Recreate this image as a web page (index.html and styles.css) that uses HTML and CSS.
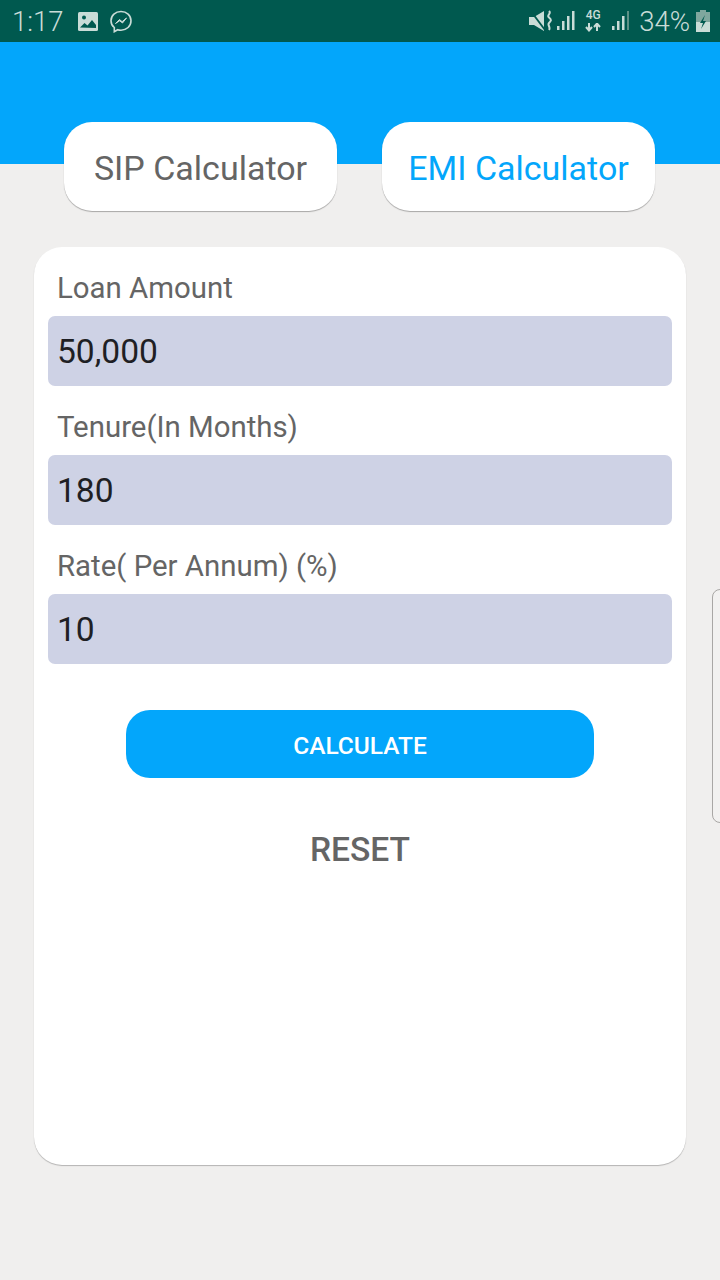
FILE: index.html
```html
<!DOCTYPE html>
<html lang="en">

<head>
    <meta charset="UTF-8">
    <meta name="viewport" content="width=device-width, initial-scale=1.0">
    <title>EMI Calculator</title>
    <link rel="stylesheet" href="styles.css">
</head>

<body>
    <div class="status-bar">
        <div class="status-left">
            <span class="time">1:17</span>
            <svg class="icon-picture" width="20" height="19" viewBox="0 0 20 19">
                <rect width="20" height="19" rx="1.500" fill="#c9dcd7"/>
                <circle cx="6" cy="5.500" r="2" fill="#00594f"/>
                <path d="M2 15.500l4.500-4.500 3 2.500 4.500-5.500 4 5v3z" fill="#00594f"/>
            </svg>
            <svg class="icon-messenger" width="22" height="23" viewBox="0 0 22 23">
                <path d="M11 1.500C5.400 1.500 1 5.500 1 10.700c0 2.900 1.300 5.200 3.300 6.800v4.200l3.400-2c1 .4 2.100.5 3.300.5 5.600 0 10-4 10-9.500S16.600 1.500 11 1.500z" fill="none" stroke="#c9dcd7" stroke-width="1.600"/>
                <path d="M5.500 13.500l4-4 2.600 2.200 4.400-3.700-4 5-2.800-2.200z" fill="#c9dcd7" stroke="#c9dcd7" stroke-width="1"/>
            </svg>
        </div>
        <div class="status-right">
            <svg class="icon-mute" width="23" height="22" viewBox="0 0 23 22">
                <path d="M0 7h5l10-6v20L5 15H0z" fill="#c9dcd7"/>
                <path d="M1 0l15 20" stroke="#00594f" stroke-width="1.800"/>
                <path d="M20 1c3 3-3 4 0 6.500s2 3.500 0 5.500 2 4 0 7" fill="none" stroke="#c9dcd7" stroke-width="2"/>
            </svg>
            <svg class="icon-signal" width="18" height="20" viewBox="0 0 18 20">
                <path d="M0 15h2.500v4H0zM5 10h2.500v9H5zM10 5h2.500v14H10zM15 0h2.500v19H15z" fill="#c9dcd7"/>
            </svg>
            <div class="net">
                <span class="net-label">4G</span>
                <svg width="16" height="9" viewBox="0 0 16 9">
                    <path d="M4 0v7M1 4l3 3.500L7 4M12 8V1M9 4l3-3.500L15 4" fill="none" stroke="#c9dcd7" stroke-width="2"/>
                </svg>
            </div>
            <svg class="icon-signal-2" width="18" height="20" viewBox="0 0 18 20">
                <path d="M0 15h2.500v4H0zM5 10h2.500v9H5zM10 5h2.500v14H10z" fill="#c9dcd7"/>
                <path d="M15 0h2v19h-2z" fill="#5d9186"/>
            </svg>
            <span class="battery-text">34%</span>
            <svg width="14" height="22" viewBox="0 0 14 22">
                <path d="M4 0h6v2h4v20H0V2h4z" fill="#7fa79e"/>
                <path d="M0 12h14v10H0z" fill="#c9dcd7"/>
                <path d="M9 5l-5 8h3l-2 6 5-8H7z" fill="#00594f"/>
            </svg>
        </div>
    </div>

    <header class="top">
        <div class="tabs">
            <div class="tab">SIP Calculator</div>
            <div class="tab tab-active">EMI Calculator</div>
        </div>
    </header>

    <section class="card">
        <div class="field">
            <label class="field-label">Loan Amount</label>
            <div class="field-input">50,000</div>
        </div>
        <div class="field">
            <label class="field-label">Tenure(In Months)</label>
            <div class="field-input">180</div>
        </div>
        <div class="field">
            <label class="field-label">Rate( Per Annum) (%)</label>
            <div class="field-input">10</div>
        </div>
        <button class="calc-btn">CALCULATE</button>
        <button class="reset-btn">RESET</button>
    </section>

    <div class="side-handle"></div>
</body>

</html>
```

FILE: styles.css
```css
body {
    margin: 0;
    padding: 0;
    height: 1280px;
    overflow: hidden;
    position: relative;
    background-color: #f0efee;
    font-family: Roboto, sans-serif;
    color: #656565;
}

.status-bar {
    height: 42px;
    background-color: #00594f;
    color: #c9dcd7;
    display: flex;
    justify-content: space-between;
    align-items: center;
    padding: 0 10px 0 12px;
    box-sizing: border-box;
}

.status-left,
.status-right {
    display: flex;
    align-items: center;
}

.time {
    font-size: 27.500px;
    font-weight: 300;
    margin-right: 14px;
}

.icon-picture {
    margin-right: 12px;
}

.icon-mute {
    margin-right: 5px;
}

.icon-signal {
    margin-right: 10px;
}

.net {
    width: 16px;
    margin-right: 11px;
    display: flex;
    flex-direction: column;
    align-items: center;
    gap: 2px;
}

.net-label {
    font-size: 12px;
    line-height: 11px;
    font-weight: 500;
}

.icon-signal-2 {
    margin-right: 9px;
}

.battery-text {
    font-size: 27.500px;
    font-weight: 300;
    margin-right: 6px;
}

.top {
    height: 122px;
    box-sizing: border-box;
    padding-top: 80px;
    background-color: #03a6fb;
}

.tabs {
    display: flex;
    justify-content: space-between;
    padding: 0 65px 0 64px;
}

.tab {
    width: 273px;
    height: 89px;
    box-sizing: border-box;
    padding-top: 3px;
    display: flex;
    align-items: center;
    justify-content: center;
    background-color: #fff;
    border-radius: 28px;
    box-shadow: 0 1px 1px rgba(0, 0, 0, 0.3);
    font-size: 34px;
    color: #656565;
}

.tab-active {
    color: #03a6fb;
}

.card {
    margin: 83px 34px 0 34px;
    height: 918px;
    box-sizing: border-box;
    padding: 21px 14px 0 14px;
    background-color: #fff;
    border-radius: 28px;
    box-shadow: 0 1px 1px rgba(0, 0, 0, 0.25);
    display: flex;
    flex-direction: column;
    align-items: center;
}

.field {
    width: 100%;
    margin-bottom: 21px;
}

.field-label {
    display: block;
    height: 48px;
    line-height: 40px;
    padding-left: 9px;
    font-size: 29.400px;
    color: #656565;
}

.field-input {
    height: 70px;
    line-height: 72px;
    padding-left: 9px;
    background-color: #ced2e5;
    border-radius: 7px;
    font-size: 33.600px;
    color: #1f1f24;
}

.calc-btn {
    width: 468px;
    height: 68px;
    margin-top: 25px;
    padding: 2px 0 0 0;
    border: none;
    border-radius: 24px;
    background-color: #03a6fb;
    color: #fff;
    font-family: Roboto, sans-serif;
    font-size: 24.500px;
    font-weight: 500;
}

.reset-btn {
    margin-top: 52px;
    padding: 0;
    border: none;
    background: none;
    color: #656565;
    font-family: Roboto, sans-serif;
    font-size: 33.600px;
    font-weight: 500;
}

.side-handle {
    position: absolute;
    top: 589px;
    right: -8px;
    width: 14px;
    height: 232px;
    border: 1px solid #a9a7a5;
    border-radius: 8px;
    background-color: #f2f1f0;
}
```
